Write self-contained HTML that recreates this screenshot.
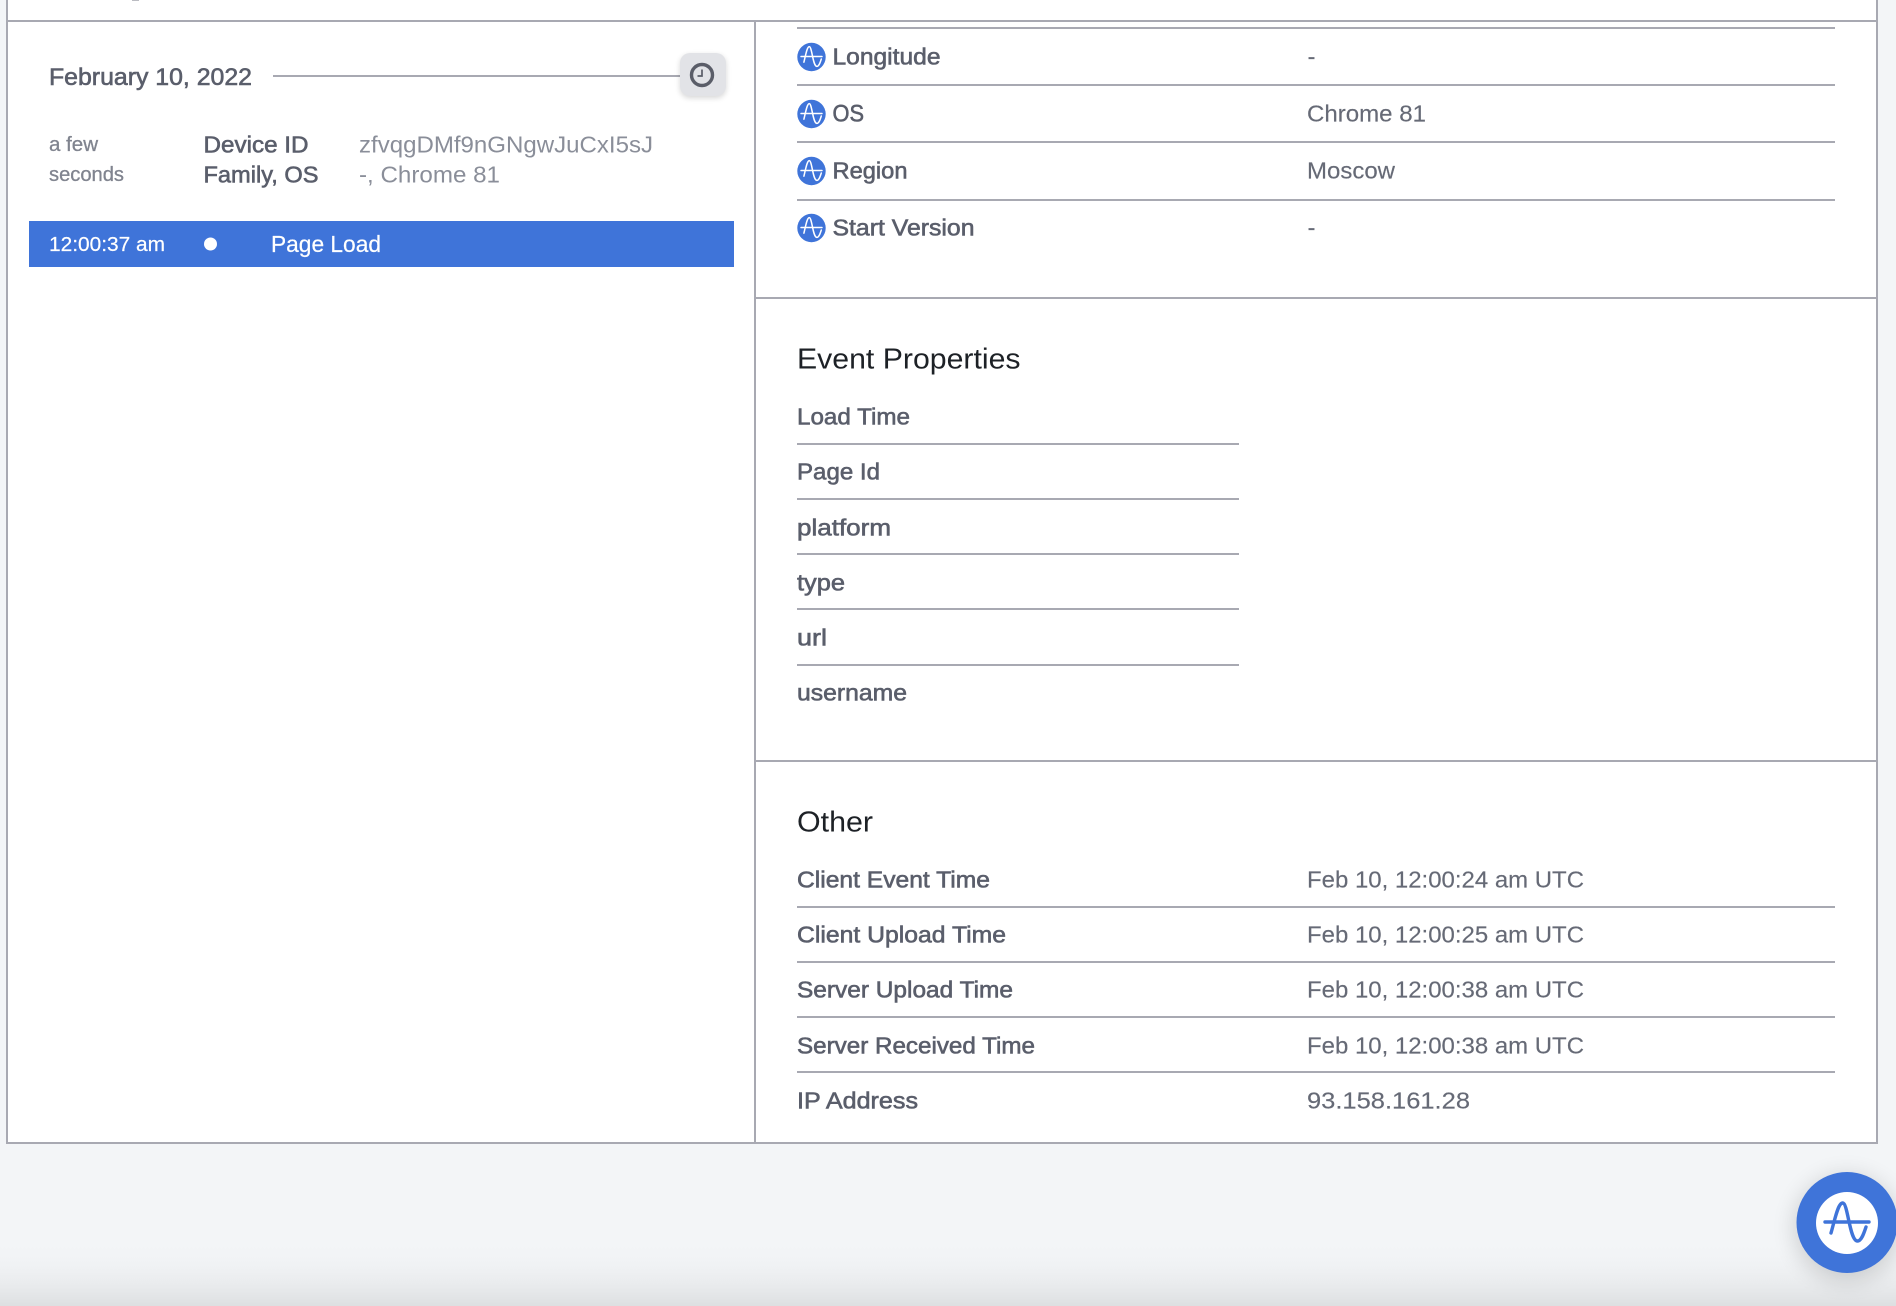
<!DOCTYPE html>
<html><head><meta charset="utf-8"><title>Event details</title>
<style>
html,body{margin:0;padding:0;width:1896px;height:1306px;overflow:hidden;background:#f3f5f7}
svg{display:block;position:absolute;left:0;top:0}
text{font-family:"Liberation Sans",sans-serif;white-space:pre}
.l{font-size:23px;fill:#5a5e6b;stroke:#5a5e6b;stroke-width:.6px}
.v{font-size:23px;fill:#666a76;stroke:#666a76;stroke-width:.15px}
.t{font-size:29px;fill:#1d2126}
</style></head><body>
<svg width="1896" height="1306" viewBox="0 0 1896 1306" xmlns="http://www.w3.org/2000/svg">
<defs>
<linearGradient id="bot" x1="0" y1="0" x2="0" y2="1"><stop offset="0" stop-color="#f3f5f7" stop-opacity="0"/><stop offset="1" stop-color="#dddfe1"/></linearGradient>
<filter id="sh" x="-60%" y="-60%" width="220%" height="220%"><feGaussianBlur stdDeviation="12"/></filter>
<filter id="sh2" x="-40%" y="-40%" width="180%" height="180%"><feGaussianBlur stdDeviation="3"/></filter>
<g id="ic"><circle r="14.2" fill="#3f74d9"/><path d="M-10.5 -.5H10.5M-7.6 5.2C-5.8 -2 -4.5 -10.4 -2.2 -10.4C.5 -10.4 1.3 9.4 5.4 9.4C7.5 9.4 8.8 5.2 9.8 2" fill="none" stroke="#fff" stroke-width="1.5" stroke-linecap="round"/></g>
</defs>

<rect x="0" y="1240" width="1896" height="66" fill="url(#bot)"/>

<!-- frame -->
<rect x="7" y="-4" width="1870" height="1147" fill="#fff" stroke="#a8a9b2" stroke-width="2"/>
<rect x="7" y="20" width="1870" height="2" fill="#a8a9b2"/>
<rect x="754" y="21" width="2" height="1122" fill="#a8a9b2"/>
<rect x="132" y="0" width="7" height="1" fill="#bbbcc2"/>

<!-- left -->
<text x="49" y="85" class="l" style="font-size:24px" textLength="203" lengthAdjust="spacingAndGlyphs">February 10, 2022</text>
<rect x="273" y="75" width="408" height="2" fill="#a8a9b2"/>
<rect x="680" y="55" width="46" height="43" rx="10" fill="#000" opacity=".16" filter="url(#sh2)"/>
<rect x="680" y="53" width="46" height="43" rx="10" fill="#e2e3e7"/>
<circle cx="702" cy="75" r="10.5" fill="none" stroke="#5a5d68" stroke-width="3.4"/>
<path d="M702 69.5V76H697.5" fill="none" stroke="#5a5d68" stroke-width="1.7"/>

<text x="49" y="151" style="font-size:20px;fill:#80848f;stroke:#80848f;stroke-width:.3px" textLength="49" lengthAdjust="spacingAndGlyphs">a few</text>
<text x="49" y="181" style="font-size:20px;fill:#80848f;stroke:#80848f;stroke-width:.3px" textLength="75" lengthAdjust="spacingAndGlyphs">seconds</text>
<text x="203.5" y="152.5" class="l" textLength="105" lengthAdjust="spacingAndGlyphs">Device ID</text>
<text x="203.5" y="182.5" class="l" textLength="115" lengthAdjust="spacingAndGlyphs">Family, OS</text>
<text x="359" y="152.5" style="font-size:23px;fill:#8a8e99" textLength="294" lengthAdjust="spacingAndGlyphs">zfvqgDMf9nGNgwJuCxI5sJ</text>
<text x="359" y="182.5" style="font-size:23px;fill:#8a8e99" textLength="141" lengthAdjust="spacingAndGlyphs">-, Chrome 81</text>

<rect x="29" y="221" width="705" height="46" fill="#3f74d9"/>
<text x="49" y="251" style="font-size:20px;fill:#fff;stroke:#fff;stroke-width:.2px" textLength="116" lengthAdjust="spacingAndGlyphs">12:00:37 am</text>
<circle cx="210.5" cy="244" r="6.5" fill="#fff"/>
<text x="271" y="252" style="font-size:23px;fill:#fff;stroke:#fff;stroke-width:.2px" textLength="110" lengthAdjust="spacingAndGlyphs">Page Load</text>

<!-- right: user properties -->
<g fill="#a8a9b2">
<rect x="797" y="27" width="1038" height="2"/>
<rect x="797" y="84" width="1038" height="2"/>
<rect x="797" y="141" width="1038" height="2"/>
<rect x="797" y="199" width="1038" height="2"/>
<rect x="755" y="297" width="1122" height="2"/>
<rect x="755" y="760" width="1122" height="2"/>
<rect x="797" y="443" width="442" height="2"/>
<rect x="797" y="498" width="442" height="2"/>
<rect x="797" y="553" width="442" height="2"/>
<rect x="797" y="608" width="442" height="2"/>
<rect x="797" y="664" width="442" height="2"/>
<rect x="797" y="906" width="1038" height="2"/>
<rect x="797" y="961" width="1038" height="2"/>
<rect x="797" y="1016" width="1038" height="2"/>
<rect x="797" y="1071" width="1038" height="2"/>
</g>
<use href="#ic" x="811.5" y="57"/>
<use href="#ic" x="811.5" y="114"/>
<use href="#ic" x="811.5" y="171"/>
<use href="#ic" x="811.5" y="228"/>
<text x="832.5" y="64.5" class="l" textLength="108" lengthAdjust="spacingAndGlyphs">Longitude</text>
<text x="832.5" y="121.5" class="l" style="font-size:24px" textLength="31.5" lengthAdjust="spacingAndGlyphs">OS</text>
<text x="832.5" y="178.5" class="l" textLength="75" lengthAdjust="spacingAndGlyphs">Region</text>
<text x="832.5" y="235.5" class="l" textLength="142" lengthAdjust="spacingAndGlyphs">Start Version</text>
<text x="1307.5" y="64.5" class="v" textLength="8" lengthAdjust="spacingAndGlyphs">-</text>
<text x="1307" y="121.5" class="v" textLength="119" lengthAdjust="spacingAndGlyphs">Chrome 81</text>
<text x="1307" y="178.5" class="v" textLength="88" lengthAdjust="spacingAndGlyphs">Moscow</text>
<text x="1307.5" y="235.5" class="v" textLength="8" lengthAdjust="spacingAndGlyphs">-</text>

<!-- event properties -->
<text x="797" y="368.5" class="t" textLength="223.5" lengthAdjust="spacingAndGlyphs">Event Properties</text>
<text x="797" y="424.5" class="l" textLength="113" lengthAdjust="spacingAndGlyphs">Load Time</text>
<text x="797" y="479.5" class="l" textLength="83" lengthAdjust="spacingAndGlyphs">Page Id</text>
<text x="797" y="535.5" class="l" textLength="94" lengthAdjust="spacingAndGlyphs">platform</text>
<text x="797" y="590.5" class="l" textLength="48" lengthAdjust="spacingAndGlyphs">type</text>
<text x="797" y="645.5" class="l" textLength="30" lengthAdjust="spacingAndGlyphs">url</text>
<text x="797" y="700.5" class="l" textLength="110" lengthAdjust="spacingAndGlyphs">username</text>

<!-- other -->
<text x="797" y="831.5" class="t" textLength="76" lengthAdjust="spacingAndGlyphs">Other</text>
<text x="797" y="887.5" class="l" textLength="193" lengthAdjust="spacingAndGlyphs">Client Event Time</text>
<text x="797" y="942.5" class="l" textLength="209" lengthAdjust="spacingAndGlyphs">Client Upload Time</text>
<text x="797" y="997.5" class="l" textLength="216" lengthAdjust="spacingAndGlyphs">Server Upload Time</text>
<text x="797" y="1053.5" class="l" textLength="238" lengthAdjust="spacingAndGlyphs">Server Received Time</text>
<text x="797" y="1108.5" class="l" textLength="121" lengthAdjust="spacingAndGlyphs">IP Address</text>
<text x="1307" y="887.5" class="v" textLength="277" lengthAdjust="spacingAndGlyphs">Feb 10, 12:00:24 am UTC</text>
<text x="1307" y="942.5" class="v" textLength="277" lengthAdjust="spacingAndGlyphs">Feb 10, 12:00:25 am UTC</text>
<text x="1307" y="997.5" class="v" textLength="277" lengthAdjust="spacingAndGlyphs">Feb 10, 12:00:38 am UTC</text>
<text x="1307" y="1053.5" class="v" textLength="277" lengthAdjust="spacingAndGlyphs">Feb 10, 12:00:38 am UTC</text>
<text x="1307" y="1108.5" class="v" textLength="163" lengthAdjust="spacingAndGlyphs">93.158.161.28</text>

<!-- widget -->
<circle cx="1847" cy="1228" r="52" fill="#000" opacity=".16" filter="url(#sh)"/>
<circle cx="1847" cy="1222.5" r="50.5" fill="#3f74d9"/>
<circle cx="1847" cy="1223" r="31" fill="#fff"/>
<g transform="translate(1847 1223)"><path d="M-22 -1H22M-16 10C-12 -4 -9 -20 -4.3 -20C1 -20 2.5 18 10.5 18C14.5 18 17 10 19 4" fill="none" stroke="#3f74d9" stroke-width="3.4" stroke-linecap="round"/></g>
</svg>
</body></html>
